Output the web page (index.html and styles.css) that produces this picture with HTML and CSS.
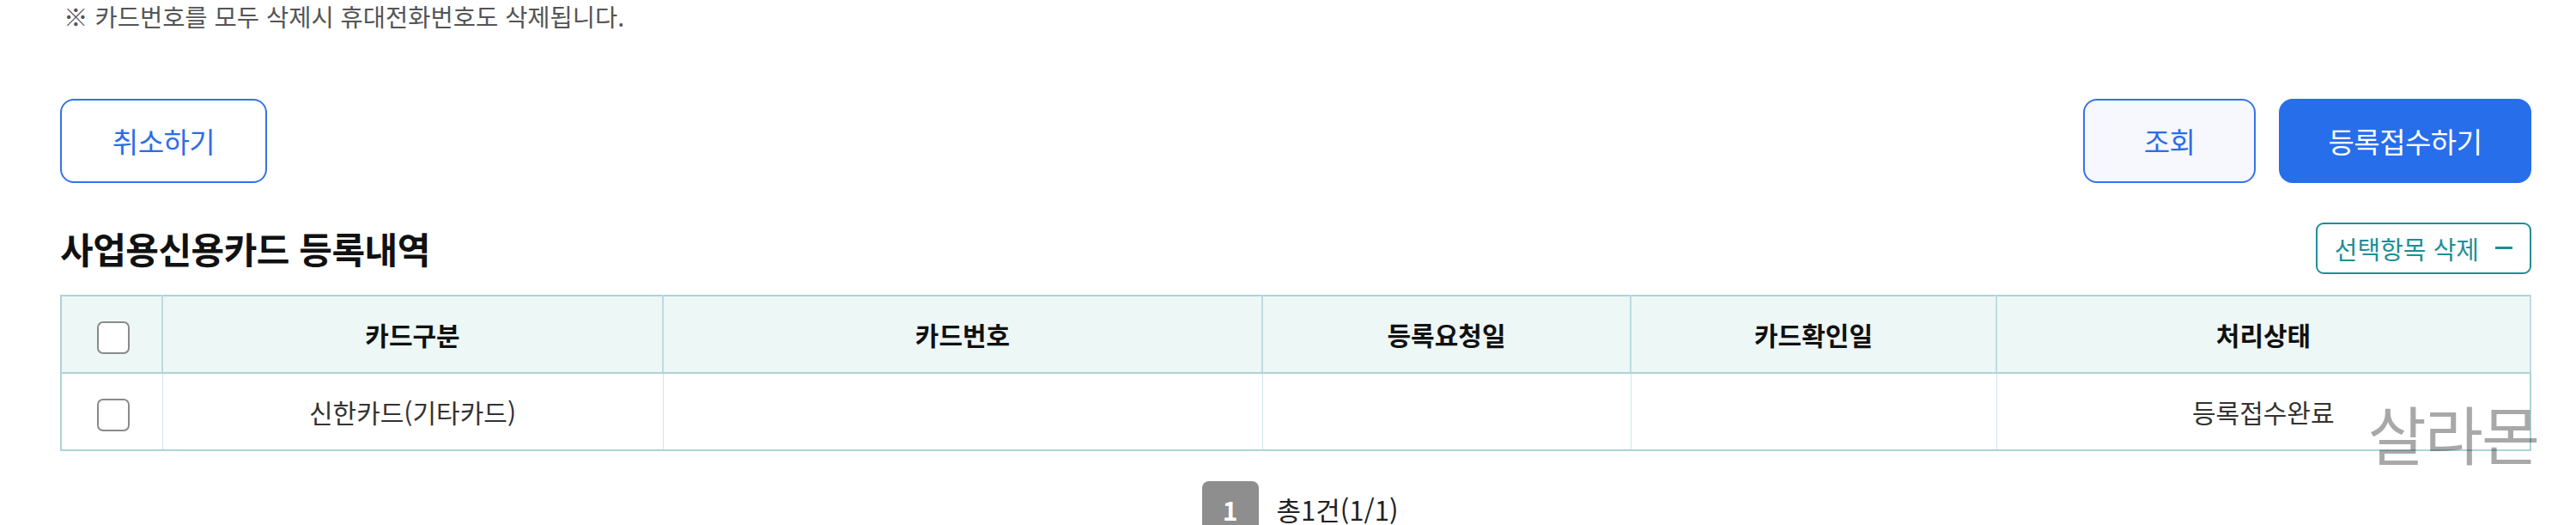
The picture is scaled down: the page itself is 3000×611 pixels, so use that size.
FILE: index.html
```html
<!DOCTYPE html>
<html lang="ko">
<head>
    <meta charset="UTF-8">
    <meta name="viewport" content="width=device-width, initial-scale=1.0">
    <title>사업용신용카드 등록내역</title>
    <link rel="stylesheet" href="styles.css">
</head>
<body>
    <div class="page">
        <p class="notice">※ 카드번호를 모두 삭제시 휴대전화번호도 삭제됩니다.</p>

        <div class="actions">
            <button type="button" class="btn btn-line">취소하기</button>
            <div class="actions-right">
                <button type="button" class="btn btn-soft btn-search">조회</button>
                <button type="button" class="btn btn-primary btn-submit">등록접수하기</button>
            </div>
        </div>

        <div class="section-head">
            <h2>사업용신용카드 등록내역</h2>
            <button type="button" class="btn-delete">선택항목 삭제 <span class="minus"></span></button>
        </div>

        <table class="list">
            <colgroup>
                <col style="width: 118px">
                <col style="width: 583px">
                <col style="width: 698px">
                <col style="width: 429px">
                <col style="width: 426px">
                <col>
            </colgroup>
            <thead>
                <tr>
                    <th><span class="check"></span></th>
                    <th>카드구분</th>
                    <th>카드번호</th>
                    <th>등록요청일</th>
                    <th>카드확인일</th>
                    <th>처리상태</th>
                </tr>
            </thead>
            <tbody>
                <tr>
                    <td><span class="check"></span></td>
                    <td>신한카드(기타카드)</td>
                    <td></td>
                    <td></td>
                    <td></td>
                    <td>등록접수완료</td>
                </tr>
            </tbody>
        </table>

        <div class="paging">
            <span class="page-num">1</span>
            <span class="total">총1건(1/1)</span>
        </div>

        <div class="watermark">살라몬</div>
    </div>
</body>
</html>
```

FILE: styles.css
```css
* {
    margin: 0;
    padding: 0;
    box-sizing: border-box;
}

body {
    font-family: "Noto Sans CJK KR", "Noto Sans", sans-serif;
    background: #fff;
    color: #222;
}

.page {
    position: relative;
    margin: 0 52px 0 70px;
}

.notice {
    font-size: 28.5px;
    line-height: 38px;
    color: #555;
    padding-left: 4px;
}

.actions {
    display: flex;
    justify-content: space-between;
    margin-top: 77px;
}

.actions-right {
    display: flex;
    gap: 27px;
}

.btn {
    height: 98px;
    border-radius: 16px;
    font-family: inherit;
    font-size: 33px;
    letter-spacing: -0.5px;
    cursor: pointer;
}

.btn-line {
    width: 241px;
    background: #fff;
    border: 2px solid #3573e8;
    color: #2c6de8;
}

.btn-soft {
    background: #f7f8fd;
    border: 2px solid #3573e8;
    color: #2c6de8;
}

.btn-search {
    width: 201px;
}

.btn-primary {
    background: #276eeb;
    border: 2px solid #276eeb;
    color: #fff;
}

.btn-submit {
    width: 294px;
}

.section-head {
    display: flex;
    justify-content: space-between;
    align-items: center;
    margin-top: 45px;
}

.section-head h2 {
    font-size: 42px;
    font-weight: 700;
    color: #111;
    letter-spacing: -0.5px;
}

.btn-delete {
    display: flex;
    align-items: center;
    gap: 19px;
    height: 60px;
    padding: 0 20px 0 20px;
    background: #fff;
    border: 2px solid #1b8f99;
    border-radius: 9px;
    font-family: inherit;
    font-size: 29px;
    color: #1b8f99;
    cursor: pointer;
}

.minus {
    display: inline-block;
    width: 20px;
    height: 3px;
    background: #1b8f99;
}

.list {
    width: 100%;
    margin-top: 24px;
    border-collapse: collapse;
    table-layout: fixed;
    border: 2px solid #aed3d8;
}

.list th,
.list td {
    height: 90px;
    text-align: center;
    vertical-align: middle;
    font-size: 30px;
}

.list th {
    background: #edf7f6;
    font-weight: 700;
    color: #111;
    border-right: 2px solid #bcdcdf;
    border-bottom: 2px solid #aed3d8;
}

.list td {
    color: #333;
    border-right: 1px solid #cfe6e9;
}

.check {
    display: inline-block;
    width: 38px;
    height: 38px;
    border: 2px solid #8a8a8a;
    border-radius: 7px;
    background: #fff;
    vertical-align: middle;
    margin-left: 4px;
}

.paging {
    display: flex;
    justify-content: center;
    align-items: flex-start;
    gap: 21px;
    margin-top: 35px;
    padding-left: 10px;
}

.page-num {
    display: flex;
    justify-content: center;
    align-items: center;
    width: 66px;
    height: 66px;
    border-radius: 8px;
    background: #8e8e8e;
    color: #fff;
    font-size: 30px;
    font-weight: 700;
}

.total {
    font-size: 31px;
    line-height: 66px;
    color: #222;
}

.watermark {
    position: absolute;
    right: -8px;
    top: 466px;
    font-size: 74px;
    line-height: 1;
    color: rgba(0, 0, 0, 0.34);
    letter-spacing: -2px;
}
```
